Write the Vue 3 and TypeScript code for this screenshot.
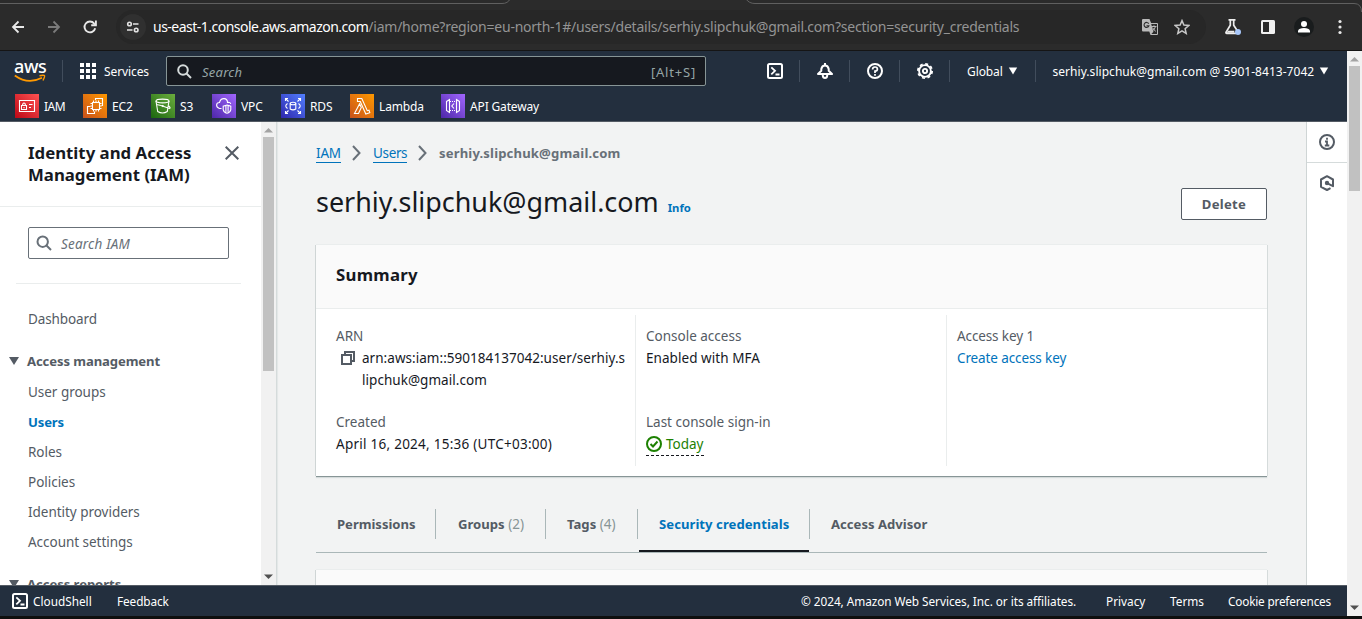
<script setup lang="ts">
interface Favorite { name: string; kind: string }
interface NavLink { label: string; active?: boolean }
interface Tab { label: string; count?: number; active?: boolean; kind: string }

const favorites: Favorite[] = [
  { name: 'IAM', kind: 'iam' },
  { name: 'EC2', kind: 'ec2' },
  { name: 'S3', kind: 's3' },
  { name: 'VPC', kind: 'vpc' },
  { name: 'RDS', kind: 'rds' },
  { name: 'Lambda', kind: 'lambda' },
  { name: 'API Gateway', kind: 'api' },
]

const accessLinks: NavLink[] = [
  { label: 'User groups' },
  { label: 'Users', active: true },
  { label: 'Roles' },
  { label: 'Policies' },
  { label: 'Identity providers' },
  { label: 'Account settings' },
]

const tabs: Tab[] = [
  { label: 'Permissions', kind: 'permissions' },
  { label: 'Groups', count: 2, kind: 'groups' },
  { label: 'Tags', count: 4, kind: 'tags' },
  { label: 'Security credentials', active: true, kind: 'security' },
  { label: 'Access Advisor', kind: 'advisor' },
]
</script>

<template>
  <div class="window">
    <header class="chrome">
      <svg class="tabline" width="1362" height="12" viewBox="0 0 1362 12" fill="none" stroke="#606060">
        <path d="M0 3.5H502Q508 3.5 510 -1" />
        <path d="M746 -1Q749 3.5 755 3.5H1354Q1361.5 3.5 1361.5 12" />
      </svg>
      <svg class="c-back" width="16" height="16" viewBox="0 0 16 16" fill="none" stroke="#e8e8e8" stroke-width="1.8"><path d="M14 8H3M8.5 2.5L3 8l5.5 5.5" /></svg>
      <svg class="c-fwd" width="16" height="16" viewBox="0 0 16 16" fill="none" stroke="#7b7b7b" stroke-width="1.8"><path d="M2 8H13M7.5 2.5L13 8l-5.5 5.5" /></svg>
      <svg class="c-reload" width="16" height="16" viewBox="0 0 16 16" fill="none" stroke="#e8e8e8" stroke-width="1.9"><path d="M13.2 9.2A5.4 5.4 0 1 1 12.2 4.6L13.8 6.2" /><path d="M13.9 1.6V6.3H9.2" /></svg>
      <div class="omnibox">
        <span class="tune">
          <svg width="14" height="12" viewBox="0 0 14 12" fill="none" stroke="#e3e3e3" stroke-width="1.6"><circle cx="3.5" cy="3" r="1.8" /><path d="M7 3h5.5M1 9h5.5" /><circle cx="10.2" cy="9" r="1.8" /></svg>
        </span>
        <span class="url"><b>us-east-1.console.aws.amazon.com</b><i>/iam/home?region=eu-north-1#/users/details/serhiy.slipchuk@gmail.com?section=security_credentials</i></span>
        <svg class="translate" width="18" height="18" viewBox="0 0 18 18">
          <path d="M2 1h6.5l1.6 4H16q1 0 1 1v10q0 1-1 1H9.5L8.3 13.5H2q-1 0-1-1V2q0-1 1-1z" fill="#b9b9b9" />
          <path d="M10.2 6h5.8v10h-5.6l2-2.3z" fill="#2b2b2b" />
          <path d="M7.7 5.6A2.5 2.5 0 1 0 7.9 7.8H5.5" fill="none" stroke="#2b2b2b" stroke-width="1.1" />
          <path d="M10.5 8.5h5M13 7.3v1.2M14.5 8.5q-.6 2.5-3.3 4.7M11.6 9.7q1.3 2.4 3.2 3.6" fill="none" stroke="#b9b9b9" />
        </svg>
        <svg class="star" width="16" height="16" viewBox="0 0 16 16" fill="none" stroke="#c7c7c7" stroke-width="1.5"><path d="M8 1.6l1.9 4.5 4.9.4-3.7 3.2 1.1 4.7L8 11.9l-4.2 2.5 1.1-4.7L1.2 6.5l4.9-.4z" /></svg>
      </div>
      <svg class="c-flask" width="18" height="18" viewBox="0 0 18 18" fill="none"><path d="M4.5 1.8h7M6.3 2v5.2L2 14.3q-.3 1 .7 1H12M9.7 2v5.2l3.3 5" stroke="#eee" stroke-width="1.7" /><path d="M3.8 12.8h6.5v2h-7.5z" fill="#eee" /><circle cx="14" cy="14" r="3" fill="#a8c7fa" /></svg>
      <svg class="c-panel" width="16" height="16" viewBox="0 0 16 16"><rect x="1" y="1" width="14" height="14" rx="1.5" fill="#f1f1f1" /><path d="M3 3h6v10H3z" fill="#2b2b2b" /></svg>
      <svg class="c-user" width="20" height="20" viewBox="0 0 20 20"><circle cx="10" cy="10" r="10" fill="#191c1d" /><circle cx="10" cy="7" r="3" fill="#fff" /><path d="M4 15.5v-1.8Q5 11 10 11t6 2.7v1.8z" fill="#fff" /></svg>
      <svg class="c-more" width="4" height="16" viewBox="0 0 4 16" fill="#e8e8e8"><circle cx="2" cy="2.5" r="1.6" /><circle cx="2" cy="8" r="1.6" /><circle cx="2" cy="13.5" r="1.6" /></svg>
    </header>

    <div class="viewport">
      <div class="page">
        <nav class="topnav">
          <div class="row1">
            <div class="logo">
              <span>aws</span>
              <svg width="32" height="9" viewBox="0 0 32 9" fill="none" stroke="#ff9900"><path d="M.8 1.5Q14 11 28 3.8" stroke-width="1.8" /><path d="M25.5 1.7q4.5-.9 5 0t-1.5 4.8" stroke-width="1.4" /></svg>
            </div>
            <i class="sep s1"></i>
            <svg class="grid" width="16" height="16" viewBox="0 0 16 16" fill="#fff"><path d="M0 0h4v4H0zM6 0h4v4H6zM12 0h4v4h-4zM0 6h4v4H0zM6 6h4v4H6zM12 6h4v4h-4zM0 12h4v4H0zM6 12h4v4H6zM12 12h4v4h-4z" /></svg>
            <span class="services">Services</span>
            <div class="search">
              <svg width="15" height="15" viewBox="0 0 15 15" fill="none" stroke="#d5dbdb" stroke-width="2"><circle cx="6" cy="6" r="4.8" /><path d="M9.5 9.5l4.5 4.5" /></svg>
              <em>Search</em><span>[Alt+S]</span>
            </div>
            <div class="tools">
              <span><svg width="16" height="16" viewBox="0 0 16 16" fill="none" stroke="#fff" stroke-width="2"><rect x="1" y="1" width="14" height="14" rx="1.5" /><path d="M4.3 4.3L8 7.8l-3.7 3.5M8.5 11.5h4" stroke-width="1.8" /></svg></span>
              <span><svg width="16" height="16" viewBox="0 0 16 16" fill="none" stroke="#fff" stroke-width="2"><path d="M8 0v2M1 11L4.3 7.8V6Q5 2.5 8 2.5T11.7 6v1.8L15 11z" stroke-linejoin="round" /><path d="M5.8 11.5v1.2Q6 15 8 15t2.2-2.3v-1.2" /></svg></span>
              <span><svg width="16" height="16" viewBox="0 0 16 16" fill="none" stroke="#fff" stroke-width="2"><circle cx="8" cy="8" r="7" /><path d="M5.6 6.5Q5.6 4 8 4t2.4 2.3Q10.4 8 8 8v2M8 11v1.8" stroke-width="1.7" /></svg></span>
              <span><svg width="16" height="16" viewBox="0 0 16 16" fill="none" stroke="#fff"><circle cx="8" cy="8" r="5.9" stroke-width="1.9" /><circle cx="8" cy="8" r="7.1" stroke-width="1.8" stroke-dasharray="2.95 2.627" /><circle cx="8" cy="8" r="2.1" stroke-width="1.9" /></svg></span>
            </div>
            <span class="region">Global<svg width="10" height="8" viewBox="0 0 10 8" fill="#fff"><path d="M.8.5h8.4L5 7.5z" /></svg></span>
            <span class="account">serhiy.slipchuk@gmail.com @ 5901-8413-7042<svg width="10" height="8" viewBox="0 0 10 8" fill="#fff"><path d="M.8.5h8.4L5 7.5z" /></svg></span>
          </div>
          <div class="favorites">
            <div v-for="f in favorites" :key="f.name" class="fav" :class="'fav-' + f.kind">
              <span class="tile" :class="f.kind">
                <svg width="24" height="24" viewBox="0 0 24 24" fill="none" stroke="#fff" stroke-width="1.1">
                  <g v-if="f.kind === 'iam'"><path d="M4.5 6.5h15v11h-15zM6.5 11.5h5v4h-5zM7.7 11.5V10Q9 8 10.3 10v1.5M9 13v1.2M14 10.5h3.5M14 13.5h2" /></g>
                  <g v-else-if="f.kind === 'ec2'"><path d="M9.5 8.5h7v7h-7zM10.5 8V6.5M13 8V6.5M15.5 8V6.5M10.5 17.5V16M13 17.5V16M15.5 17.5V16M9 9.5H7.5M9 12H7.5M9 14.5H7.5M18.5 9.5H17M18.5 12H17M18.5 14.5H17" /><path d="M12.5 6V4.5h7v7H18.5M7.5 12.5h-3v7h7v-2" /></g>
                  <g v-else-if="f.kind === 's3'"><ellipse cx="11.5" cy="7" rx="6.5" ry="1.9" /><path d="M5 7l1.7 10.5Q11.5 20.5 16.3 17.5L18 7M5.5 10.5l4.5 1 8.5 3q1.5-.2-.8-2.5" /><path d="M11 11.5l1.5 1" stroke-width="1.8" /></g>
                  <g v-else-if="f.kind === 'vpc'"><path d="M9.5 14.5H7.5Q4.5 13.5 4.6 11T7.5 8.5Q8.5 4.5 12 4.6T15.5 8.5Q18.5 8 18.7 10" /><path d="M15 11l3.8 1.2v3.5q-.5 2.8-3.8 3.6-3.3-.8-3.8-3.6v-3.5zM13.9 11.8v6.5M16.1 11.8v6.5" /></g>
                  <g v-else-if="f.kind === 'rds'"><ellipse cx="12" cy="9.5" rx="2.8" ry="1.3" /><path d="M9.2 9.5v5.5q2.8 1.8 5.6 0V9.5M4.5 7V4.5H7M5 5l2.5 2.5M17 4.5h2.5V7M19 5l-2.5 2.5M4.5 17v2.5H7M5 19l2.5-2.5M17 19.5h2.5V17M19 19l-2.5-2.5M6.5 9.5Q3 12 6.5 14.5M17.5 9.5Q21 12 17.5 14.5" /></g>
                  <g v-else-if="f.kind === 'lambda'"><path d="M7.5 4.5h4.3l5.5 12.2 1.7-.5.8 2.5-4 1.3L10.3 7.5H7.5zM9.6 9.8L11.3 13.5 8.5 19.5h-4z" /></g>
                  <g v-else><path d="M5.5 7.5l3-2v13l-3-2zM18.5 7.5l-3-2v13l3-2zM13 9.5L10.8 12l2.2 2.5" /><path d="M9 7.5h6M9 16.5h6" stroke-dasharray="1 1" /></g>
                </svg>
              </span>
              {{ f.name }}
            </div>
          </div>
        </nav>

        <div class="body">
          <aside class="sidenav">
            <div class="sn-head">
              <h2>Identity and Access<br />Management (IAM)</h2>
              <svg width="14" height="14" viewBox="0 0 14 14" stroke="#545b64" stroke-width="2"><path d="M.7.7l12.6 12.6M13.3.7L.7 13.3" /></svg>
            </div>
            <div class="sn-search">
              <svg width="16" height="16" viewBox="0 0 16 16" fill="none" stroke="#687078" stroke-width="2"><circle cx="6.7" cy="6.7" r="5.2" /><path d="M10.5 10.5l4.5 4.5" /></svg>
              <em>Search IAM</em>
            </div>
            <hr />
            <a class="lnk dash">Dashboard</a>
            <div class="group"><svg width="10" height="8" viewBox="0 0 10 8" fill="#545b64"><path d="M0 0h10L5 8z" /></svg>Access management</div>
            <a v-for="l in accessLinks" :key="l.label" class="lnk" :class="{ active: l.active }">{{ l.label }}</a>
            <div class="group last"><svg width="10" height="8" viewBox="0 0 10 8" fill="#545b64"><path d="M0 0h10L5 8z" /></svg>Access reports</div>
          </aside>
          <div class="bar side">
            <svg width="9" height="5" viewBox="0 0 9 5" fill="#a3a3a3"><path d="M0 4.5L4.5 0 9 4.5z" /></svg>
            <i></i>
            <svg width="9" height="5" viewBox="0 0 9 5" fill="#505050"><path d="M0 .5h9L4.5 5z" /></svg>
          </div>

          <main>
            <div class="crumbs">
              <a class="iam-link">IAM</a>
              <svg width="9" height="16" viewBox="0 0 9 16" fill="none" stroke="#687078" stroke-width="2"><path d="M1 1l6.5 7L1 15" /></svg>
              <a class="users-link">Users</a>
              <svg width="9" height="16" viewBox="0 0 9 16" fill="none" stroke="#687078" stroke-width="2"><path d="M1 1l6.5 7L1 15" /></svg>
              <strong>serhiy.slipchuk@gmail.com</strong>
            </div>
            <div class="title">
              <h1>serhiy.slipchuk@gmail.com</h1><a>Info</a>
              <button>Delete</button>
            </div>
            <section class="card">
              <h3>Summary</h3>
              <div class="cols">
                <div class="col">
                  <label>ARN</label>
                  <div class="arn">
                    <svg width="14" height="14" viewBox="0 0 14 14" fill="none" stroke="#545b64" stroke-width="2"><path d="M1 4h9v9H1zM4 3.5V1h9v9h-2.5" /></svg>
                    <p>arn:aws:iam::590184137042:user/serhiy.s<br />lipchuk@gmail.com</p>
                  </div>
                  <label>Created</label>
                  <p class="date">April 16, 2024, 15:36 (UTC+03:00)</p>
                </div>
                <div class="col">
                  <label>Console access</label>
                  <p class="tall">Enabled with MFA</p>
                  <label>Last console sign-in</label>
                  <span class="today"><svg width="16" height="16" viewBox="0 0 16 16" fill="none" stroke="#1d8102" stroke-width="2"><circle cx="8" cy="8" r="7" /><path d="M4.5 8l2.5 2.5L11.5 5.5" /></svg>Today</span>
                </div>
                <div class="col">
                  <label class="tight">Access key 1</label>
                  <p class="tight"><a>Create access key</a></p>
                </div>
              </div>
            </section>
            <div class="tabs">
              <div v-for="t in tabs" :key="t.kind" class="tab" :class="[t.kind, { active: t.active }]">
                <span>{{ t.label }}<small v-if="t.count"> ({{ t.count }})</small></span>
              </div>
            </div>
            <section class="card next"></section>
          </main>

          <aside class="rail">
            <div><svg width="16" height="16" viewBox="0 0 16 16" fill="none" stroke="#545b64" stroke-width="2"><circle cx="8" cy="8" r="7" /><path d="M8 3.8v2M6 7.5h2v3.5M5.8 11.5h4.5" stroke-width="1.8" /></svg></div>
            <div><svg width="16" height="16" viewBox="0 0 16 16" fill="none" stroke="#545b64" stroke-width="2"><path d="M11.5 13.1L8 15 2 11.8V4.5L8 1.2l6 3.3v6.7L8.5 8.3" stroke-linejoin="round" /><circle cx="8" cy="8" r="2.2" fill="#545b64" stroke="none" /></svg></div>
          </aside>
        </div>

        <footer>
          <svg width="16" height="16" viewBox="0 0 16 16" fill="none" stroke="#fff" stroke-width="2"><rect x="1" y="1" width="14" height="14" rx="1.5" /><path d="M4.3 4.3L8 7.8l-3.7 3.5M8.5 11.5h4" stroke-width="1.8" /></svg>
          <span class="f-shell">CloudShell</span><span class="f-feed">Feedback</span>
          <span class="f-copy">© 2024, Amazon Web Services, Inc. or its affiliates.</span>
          <span class="f-priv">Privacy</span><span class="f-terms">Terms</span><span class="f-cookie">Cookie preferences</span>
        </footer>
      </div>
      <div class="bar outer">
        <svg width="9" height="5" viewBox="0 0 9 5" fill="#a3a3a3"><path d="M0 4.5L4.5 0 9 4.5z" /></svg>
        <i></i>
        <svg width="9" height="5" viewBox="0 0 9 5" fill="#505050"><path d="M0 .5h9L4.5 5z" /></svg>
      </div>
    </div>
    <div class="desk"></div>
  </div>
</template>

<style scoped>
* { box-sizing: border-box; }
svg { display: block; flex: none; }
.window { width: 1362px; height: 619px; overflow: hidden; display: flex; flex-direction: column; font-family: "Noto Sans", "Open Sans", sans-serif; font-size: 13.5px; color: #16191f; background: #0e0f0e; }

.chrome { position: relative; height: 51px; flex: none; display: flex; align-items: center; padding-top: 3px; background: #2b2b2b; border-bottom: 1px solid #151515; }
.tabline { position: absolute; left: 0; top: 0; }
.c-back { margin-left: 10px; }
.c-fwd { margin-left: 20px; }
.c-reload { margin-left: 20px; }
.omnibox { margin-left: 18px; width: 1090px; height: 34px; border-radius: 17px; background: #272727; display: flex; align-items: center; }
.tune { width: 26px; height: 26px; margin-left: 4px; border-radius: 50%; background: #303030; display: flex; align-items: center; justify-content: center; }
.url { margin-left: 7px; width: 988px; white-space: nowrap; font-size: 14px; line-height: 20px; }
.url b { font-weight: 400; color: #fff; letter-spacing: -0.515px; }
.url i { font-style: normal; color: #949494; letter-spacing: -0.23px; }
.star { margin-left: 15px; }
.c-flask { margin-left: 18px; }
.c-panel { margin-left: 18px; }
.c-user { margin-left: 18px; }
.c-more { margin-left: 24px; }

.viewport { height: 565px; flex: none; display: flex; }
.page { width: 1347px; display: flex; flex-direction: column; }
.bar { width: 15px; flex: none; background: #f1f1f1; display: flex; flex-direction: column; align-items: center; }
.bar i { width: 11px; background: #c1c1c1; }
.bar svg:last-child { margin-top: auto; margin-bottom: 6px; }
.outer svg:first-child { margin: 6px 0 4px; }
.outer i { height: 125px; }
.side svg:first-child { margin: 6px 0 4px; }
.side i { height: 234px; }

.topnav { height: 71px; flex: none; background: #232f3e; border-bottom: 1px solid #545b64; color: #fff; font-size: 12px; }
.row1 { display: flex; align-items: center; height: 40px; }
.logo { width: 32px; margin-left: 14px; height: 22px; color: #fff; }
.logo span { display: block; height: 14px; font: 500 18px/12px "Noto Sans", sans-serif; letter-spacing: -0.4px; }
.sep { width: 1px; height: 22px; background: #414d5c; }
.s1 { margin-left: 16px; }
.grid { margin-left: 17px; }
.services { margin-left: 8px; width: 62px; letter-spacing: -0.1px; }
.search { width: 540px; height: 30px; border: 1px solid #879596; border-radius: 2px; background: #16191f; display: flex; align-items: center; padding: 2px 9px 0 11px; color: #95a5a6; font-size: 13px; }
.search svg { margin: -2px 0 0 -1px; }
.search em { margin-left: 10px; letter-spacing: 0.25px; }
.search span { margin-left: auto; letter-spacing: 0.8px; }
.tools { display: flex; margin-left: 44px; }
.tools span { width: 50px; height: 22px; display: flex; align-items: center; justify-content: center; border-right: 1px solid #414d5c; }
.region { margin-left: 17px; width: 69px; height: 22px; border-right: 1px solid #414d5c; display: flex; align-items: center; letter-spacing: -0.1px; }
.region svg { margin-left: 5px; }
.account { margin-left: 16.5px; display: flex; align-items: center; letter-spacing: 0.04px; white-space: nowrap; }
.account svg { margin-left: 5px; }
.favorites { display: grid; grid-template-columns: 68px 68px 61px 69px 69px 91px 110px; padding: 3px 0 0 15px; }
.fav { display: flex; align-items: center; gap: 5px; height: 24px; letter-spacing: -0.15px; white-space: nowrap; }
.fav-iam { letter-spacing: -0.5px; }
.tile { width: 24px; height: 24px; flex: none; }
.iam { background: linear-gradient(45deg, #bd0816, #ff5252); }
.ec2, .lambda { background: linear-gradient(45deg, #c8511b, #f90); }
.s3 { background: linear-gradient(45deg, #1b660f, #6cae3e); }
.vpc, .api { background: linear-gradient(45deg, #4d27a8, #a166ff); }
.rds { background: linear-gradient(45deg, #2e27ad, #527fff); }

.body { height: 463px; flex: none; display: flex; background: #f2f3f3; overflow: hidden; }
.sidenav { width: 261px; height: 463px; overflow: hidden; background: #fff; color: #545b64; }
.sn-head { height: 85px; padding: 20px 22px 0 28px; display: flex; justify-content: space-between; border-bottom: 1px solid #eaeded; }
.sn-head h2 { margin: 0; font-size: 16.8px; line-height: 22px; color: #16191f; }
.sn-head svg { margin-top: 4px; }
.sn-search { margin: 20px 0 0 28px; width: 201px; height: 32px; border: 1px solid #687078; border-radius: 2px; display: flex; align-items: center; padding-left: 7px; }
.sn-search em { margin: 2px 0 0 9px; color: #687078; letter-spacing: 0.2px; }
hr { margin: 24px 20px 0 16px; border: 0; height: 1px; background: #eaeded; }
.lnk { display: block; margin-left: 28px; height: 30px; line-height: 30px; letter-spacing: -0.03px; }
.dash { margin-top: 20px; letter-spacing: -0.1px; }
.lnk.active { color: #0073bb; font-weight: 700; font-size: 13.1px; letter-spacing: -0.15px; }
.group { display: flex; align-items: center; margin-top: 13px; padding-left: 9px; height: 28px; font-size: 13.1px; font-weight: 700; letter-spacing: -0.1px; margin-bottom: 2px; }
.group svg { margin-right: 8px; }
.group.last { margin-top: 13px; letter-spacing: -0.05px; }

main { width: 1030px; height: 463px; overflow: hidden; padding-left: 39px; border-left: 1px solid #d5dbdb; box-shadow: inset 1px 0 1px #e3e7e7; }
.crumbs { margin-top: 20px; height: 22px; display: flex; align-items: center; }
.crumbs a { color: #0073bb; border-bottom: 1px solid #0073bb; line-height: 18px; height: 19px; white-space: nowrap; }
.iam-link { width: 25px; letter-spacing: -0.2px; }
.users-link { width: 34px; letter-spacing: -0.35px; }
.crumbs svg { margin: 0 12px 0 11px; }
.crumbs strong { font-size: 13.1px; color: #687078; letter-spacing: 0.15px; }
.title { margin-top: 20px; height: 40px; display: flex; align-items: baseline; position: relative; width: 951px; }
.title h1 { margin: 0; font-size: 26.9px; line-height: 36px; font-weight: 400; }
.title a { margin-left: 9px; color: #0073bb; font-size: 11.3px; font-weight: 700; }
.title button { margin-left: auto; align-self: flex-start; margin-top: 4px; width: 86px; height: 32px; padding: 0; border: 1px solid #545b64; border-radius: 2px; background: #fff; font: 700 13.1px "Noto Sans", sans-serif; letter-spacing: 0.3px; color: #545b64; }
.card { width: 951px; height: 231px; margin-top: 21px; background: #fff; box-shadow: 0 -1px 0 #eaeded, -1px 0 0 #cfd5d5, 1px 0 0 #d5dbdb, 0 1px 0 #879596, 0 2px 1px #d5dbdb; }
.card h3 { margin: 0; height: 64px; padding-left: 20px; line-height: 60px; font-size: 16.8px; letter-spacing: 0.25px; background: #fafafa; border-bottom: 1px solid #eaeded; }
.cols { display: flex; padding-top: 6px; }
.col { width: 311px; height: 151px; padding: 10px 0 0 10px; border-left: 1px solid #eaeded; }
.col:first-child { width: 319px; padding-left: 20px; border: 0; }
.col label { display: block; line-height: 22px; color: #545b64; }
.col p { margin: 0; line-height: 22px; }
.arn { display: flex; height: 64px; padding-left: 5px; white-space: nowrap; letter-spacing: 0.04px; }
.arn svg { margin: 4px 7px 0 0; }
.date { letter-spacing: 0.26px; }
.tall { height: 64px; letter-spacing: 0.06px; }
.tight { letter-spacing: -0.11px; }
.col p a { color: #0073bb; }
.today { display: inline-flex; align-items: center; gap: 4px; height: 23px; color: #1d8102; border-bottom: 1px dashed #16191f; line-height: 22px; }
.tabs { width: 951px; height: 53px; margin-top: 24px; display: flex; border-bottom: 1px solid #aab7b8; }
.tab { height: 52px; display: flex; align-items: flex-start; padding: 9px 0 0 21px; color: #545b64; font-size: 13.1px; font-weight: 700; white-space: nowrap; }
.tab span { display: block; width: 100%; height: 30px; line-height: 31px; border-right: 1px solid #aab7b8; }
.tab small { font-size: 13.5px; font-weight: 400; color: #879596; }
.permissions { width: 120px; letter-spacing: -0.03px; }
.groups { width: 110px; padding-left: 22px; }
.tags { width: 92px; }
.security { width: 172px; letter-spacing: 0.05px; }
.tab.active { color: #0073bb; position: relative; }
.tab.active::after { content: ""; position: absolute; left: 1px; right: 1px; bottom: 0; height: 2px; background: #16191f; }
.advisor span { border: 0; }
.next { height: 60px; margin-top: 17px; background: #fafafa; }

.rail { width: 41px; flex: none; background: #fff; border-left: 1px solid #cfd5d5; }
.rail div { height: 41px; display: flex; align-items: center; justify-content: center; }
.rail div:first-child { border-bottom: 1px solid #d5dbdb; }
.rail div:last-child { height: 40px; }

footer { height: 31px; flex: none; display: flex; align-items: center; border-top: 1px solid #545b64; background: #232f3e; color: #fff; font-size: 11.8px; padding-left: 12px; white-space: nowrap; }
footer span { padding-bottom: 1px; }
.f-shell { margin-left: 5px; width: 84px; }
.f-feed { width: 684px; letter-spacing: -0.1px; }
.f-copy { width: 305px; letter-spacing: -0.05px; }
.f-priv { width: 64px; }
.f-terms { width: 58px; }
.f-cookie { letter-spacing: -0.2px; }
.desk { height: 3px; }
</style>
